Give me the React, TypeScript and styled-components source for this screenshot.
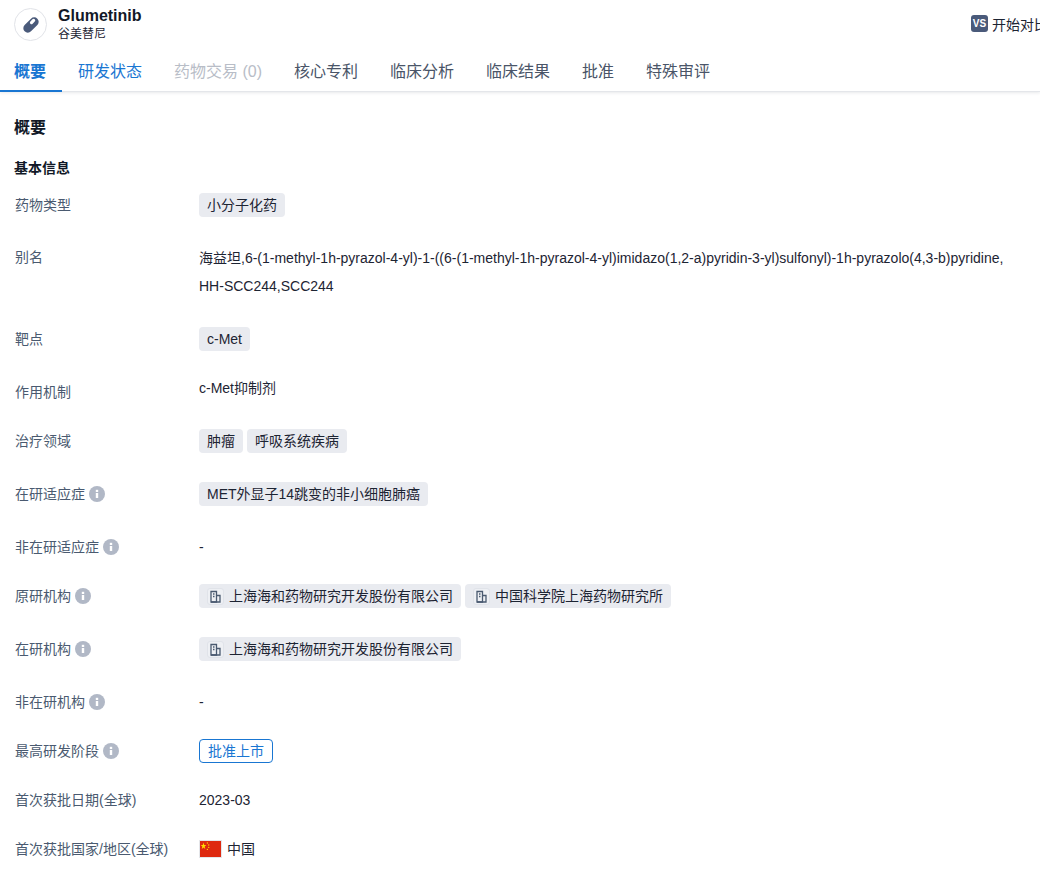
import React from 'react';
import styled, { createGlobalStyle } from 'styled-components';

const GlobalStyle = createGlobalStyle`
  html, body {
    margin: 0;
    padding: 0;
    background: #fff;
    overflow: hidden;
    font-family: "Liberation Sans", "Noto Sans CJK SC", sans-serif;
  }
`;

const Page = styled.div`
  width: 1040px;
  height: 880px;
  overflow: hidden;
`;

const Header = styled.header`
  height: 92px;
  box-sizing: border-box;
  border-bottom: 1px solid #e4e6ea;
  box-shadow: 0 1px 3px rgba(30, 40, 60, 0.1);
`;

const TitleBar = styled.div`
  height: 50px;
  padding: 0 0 0 14px;
  display: flex;
  justify-content: space-between;
`;

const TitleLeft = styled.div`
  display: flex;
  gap: 11px;
  padding-top: 8px;
`;

const DrugBadge = styled.div`
  width: 31px;
  height: 31px;
  border: 1px solid #e1e3e8;
  border-radius: 50%;
  display: flex;
  align-items: center;
  justify-content: center;
`;

const DrugName = styled.div`
  margin: 0 0 1px;
  font-size: 16px;
  font-weight: 700;
  line-height: 16px;
  color: #111827;
`;

const DrugAlias = styled.div`
  font-size: 12px;
  line-height: 18px;
  color: #1d2433;
`;

const CompareBox = styled.div`
  display: flex;
  align-items: center;
  gap: 4px;
  height: 17px;
  margin-top: 15px;
  width: 69px;
  white-space: nowrap;
  font-size: 14px;
  color: #1d2433;
`;

const VsIcon = styled.span`
  flex: none;
  width: 17px;
  height: 17px;
  border-radius: 3px;
  background: #4a5a7a;
  color: #fff;
  font-size: 10px;
  font-weight: 700;
  line-height: 17px;
  text-align: center;
`;

const Tabs = styled.nav`
  display: flex;
  height: 42px;
`;

const Tab = styled.div<{ $active?: boolean; $disabled?: boolean }>`
  box-sizing: border-box;
  height: 42px;
  padding: 0 16px;
  font-size: 16px;
  line-height: 44px;
  white-space: nowrap;
  font-weight: ${({ $active }) => ($active ? 700 : 400)};
  color: ${({ $active, $disabled }) => ($active ? '#1976d2' : $disabled ? '#b8bdc7' : '#4a5568')};
  border-bottom: 2px solid ${({ $active }) => ($active ? '#1976d2' : 'transparent')};
  &:first-child {
    padding: 0 16px 0 14px;
  }
`;

const Blue = styled(Tab)`
  color: #1976d2;
`;

const Content = styled.main`
  padding: 26px 0 0 14px;
`;

const SectionTitle = styled.h2`
  margin: 0;
  font-size: 16px;
  line-height: 20px;
  font-weight: 700;
  color: #111827;
`;

const SubTitle = styled.h3`
  margin: 20px 0 10px;
  font-size: 14px;
  line-height: 20px;
  font-weight: 700;
  color: #111827;
`;

const InfoRow = styled.div<{ $height: number }>`
  display: flex;
  height: ${({ $height }) => $height}px;
`;

const Label = styled.div<{ $top: number }>`
  flex: none;
  width: 185px;
  box-sizing: border-box;
  padding: ${({ $top }) => $top}px 0 0 1px;
  display: flex;
  align-items: flex-start;
  gap: 4px;
  font-size: 14px;
  line-height: 20px;
  color: #4a5a70;
  white-space: nowrap;
`;

const Value = styled.div<{ $top: number }>`
  padding-top: ${({ $top }) => $top}px;
  display: flex;
  align-items: flex-start;
  gap: 4px;
  font-size: 14px;
  line-height: 29px;
  color: #1d2433;
`;

const PlainText = styled.div`
  font-size: 14px;
  line-height: 20px;
  color: #1d2433;
`;

const LongText = styled.div`
  width: 830px;
  font-size: 14px;
  line-height: 28px;
  color: #1d2433;
`;

const Chip = styled.span`
  display: inline-flex;
  align-items: center;
  height: 24px;
  padding: 0 8px;
  border-radius: 4px;
  background: #e9ebf0;
  font-size: 14px;
  line-height: 23px;
  color: #1d2433;
  white-space: nowrap;
`;

const OrgIcon = styled.span`
  box-sizing: border-box;
  width: 17px;
  height: 17px;
  margin-right: 5px;
  border: 1px solid #e0e3e9;
  border-radius: 3px;
  background: #eef0f4;
  display: inline-flex;
  align-items: center;
  justify-content: center;
`;

const OutlineTag = styled.span`
  display: inline-block;
  box-sizing: border-box;
  height: 24px;
  padding: 0 8px;
  border: 1px solid #1976d2;
  border-radius: 4px;
  font-size: 14px;
  line-height: 22px;
  color: #1976d2;
`;

const CountryRow = styled.div`
  display: flex;
  align-items: center;
  gap: 5px;
  font-size: 14px;
  line-height: 20px;
  color: #1d2433;
`;

const FlagBox = styled.svg`
  display: block;
  box-sizing: border-box;
  border: 1px solid #e4e6ea;
`;

const InfoGlyph = styled.svg`
  flex: none;
  margin-top: 2px;
`;

const Info = () => (
  <InfoGlyph width="16" height="16" viewBox="0 0 16 16">
    <circle cx="8" cy="8" r="8" fill="#b1b8c6" />
    <rect x="6.8" y="7" width="2.4" height="5" fill="#fff" />
    <rect x="6.8" y="3.8" width="2.4" height="2.2" fill="#fff" />
  </InfoGlyph>
);

const Pill = () => (
  <svg width="20" height="20" viewBox="0 0 20 20">
    <g transform="rotate(-45 10 10)">
      <rect x="1" y="5.5" width="18" height="9" rx="4.5" fill="#4a5a7a" />
      <rect x="10.5" y="7" width="6.2" height="3.2" rx="1.6" fill="#fff" />
    </g>
  </svg>
);

const Building = () => (
  <svg width="11" height="13" viewBox="0 0 11 13" fill="none" stroke="#4a5a70" strokeWidth="1.3">
    <path d="M1 12V1.5h5.5V12z" />
    <path d="M6.5 5.5H10V12H1" />
    <path d="M3 4h1.5M3 6.5h1.5" />
  </svg>
);

const Flag = () => (
  <FlagBox width="23" height="18" viewBox="0 0 30 20" preserveAspectRatio="none">
    <rect width="30" height="20" fill="#de2910" />
    <polygon points="5,2 6,5 9,5 6.6,7 7.5,10 5,8.2 2.5,10 3.4,7 1,5 4,5" fill="#ffde00" />
    <circle cx="10.5" cy="2.5" r="0.9" fill="#ffde00" />
    <circle cx="12.5" cy="5" r="0.9" fill="#ffde00" />
    <circle cx="12.5" cy="8" r="0.9" fill="#ffde00" />
    <circle cx="10.5" cy="10.5" r="0.9" fill="#ffde00" />
  </FlagBox>
);

const Org = ({ name }: { name: string }) => (
  <Chip>
    <OrgIcon>
      <Building />
    </OrgIcon>
    {name}
  </Chip>
);

const App: React.FC = () => (
  <Page>
    <GlobalStyle />
    <Header>
      <TitleBar>
        <TitleLeft>
          <DrugBadge>
            <Pill />
          </DrugBadge>
          <div>
            <DrugName>Glumetinib</DrugName>
            <DrugAlias>谷美替尼</DrugAlias>
          </div>
        </TitleLeft>
        <CompareBox>
          <VsIcon>VS</VsIcon>
          开始对比
        </CompareBox>
      </TitleBar>
      <Tabs>
        <Tab $active>概要</Tab>
        <Blue>研发状态</Blue>
        <Tab $disabled>药物交易 (0)</Tab>
        <Tab>核心专利</Tab>
        <Tab>临床分析</Tab>
        <Tab>临床结果</Tab>
        <Tab>批准</Tab>
        <Tab>特殊审评</Tab>
      </Tabs>
    </Header>
    <Content>
      <SectionTitle>概要</SectionTitle>
      <SubTitle>基本信息</SubTitle>
      <InfoRow $height={53}>
        <Label $top={7}>药物类型</Label>
        <Value $top={5}>
          <Chip>小分子化药</Chip>
        </Value>
      </InfoRow>
      <InfoRow $height={81}>
        <Label $top={6}>别名</Label>
        <Value $top={3}>
          <LongText>
            海益坦,6-(1-methyl-1h-pyrazol-4-yl)-1-((6-(1-methyl-1h-pyrazol-4-yl)imidazo(1,2-a)pyridin-3-yl)sulfonyl)-1h-pyrazolo(4,3-b)pyridine, HH-SCC244,SCC244
          </LongText>
        </Value>
      </InfoRow>
      <InfoRow $height={54}>
        <Label $top={7}>靶点</Label>
        <Value $top={5}>
          <Chip>c-Met</Chip>
        </Value>
      </InfoRow>
      <InfoRow $height={50}>
        <Label $top={6}>作用机制</Label>
        <Value $top={2}>
          <PlainText>c-Met抑制剂</PlainText>
        </Value>
      </InfoRow>
      <InfoRow $height={53}>
        <Label $top={5}>治疗领域</Label>
        <Value $top={3}>
          <Chip>肿瘤</Chip>
          <Chip>呼吸系统疾病</Chip>
        </Value>
      </InfoRow>
      <InfoRow $height={53}>
        <Label $top={5}>
          在研适应症
          <Info />
        </Label>
        <Value $top={3}>
          <Chip>MET外显子14跳变的非小细胞肺癌</Chip>
        </Value>
      </InfoRow>
      <InfoRow $height={49}>
        <Label $top={5}>
          非在研适应症
          <Info />
        </Label>
        <Value $top={5}>
          <PlainText>-</PlainText>
        </Value>
      </InfoRow>
      <InfoRow $height={53}>
        <Label $top={5}>
          原研机构
          <Info />
        </Label>
        <Value $top={3}>
          <Org name="上海海和药物研究开发股份有限公司" />
          <Org name="中国科学院上海药物研究所" />
        </Value>
      </InfoRow>
      <InfoRow $height={53}>
        <Label $top={5}>
          在研机构
          <Info />
        </Label>
        <Value $top={3}>
          <Org name="上海海和药物研究开发股份有限公司" />
        </Value>
      </InfoRow>
      <InfoRow $height={49}>
        <Label $top={5}>
          非在研机构
          <Info />
        </Label>
        <Value $top={5}>
          <PlainText>-</PlainText>
        </Value>
      </InfoRow>
      <InfoRow $height={49}>
        <Label $top={5}>
          最高研发阶段
          <Info />
        </Label>
        <Value $top={3}>
          <OutlineTag>批准上市</OutlineTag>
        </Value>
      </InfoRow>
      <InfoRow $height={49}>
        <Label $top={5}>首次获批日期(全球)</Label>
        <Value $top={5}>
          <PlainText>2023-03</PlainText>
        </Value>
      </InfoRow>
      <InfoRow $height={40}>
        <Label $top={5}>首次获批国家/地区(全球)</Label>
        <Value $top={5}>
          <CountryRow>
            <Flag />
            中国
          </CountryRow>
        </Value>
      </InfoRow>
    </Content>
  </Page>
);

export default App;
